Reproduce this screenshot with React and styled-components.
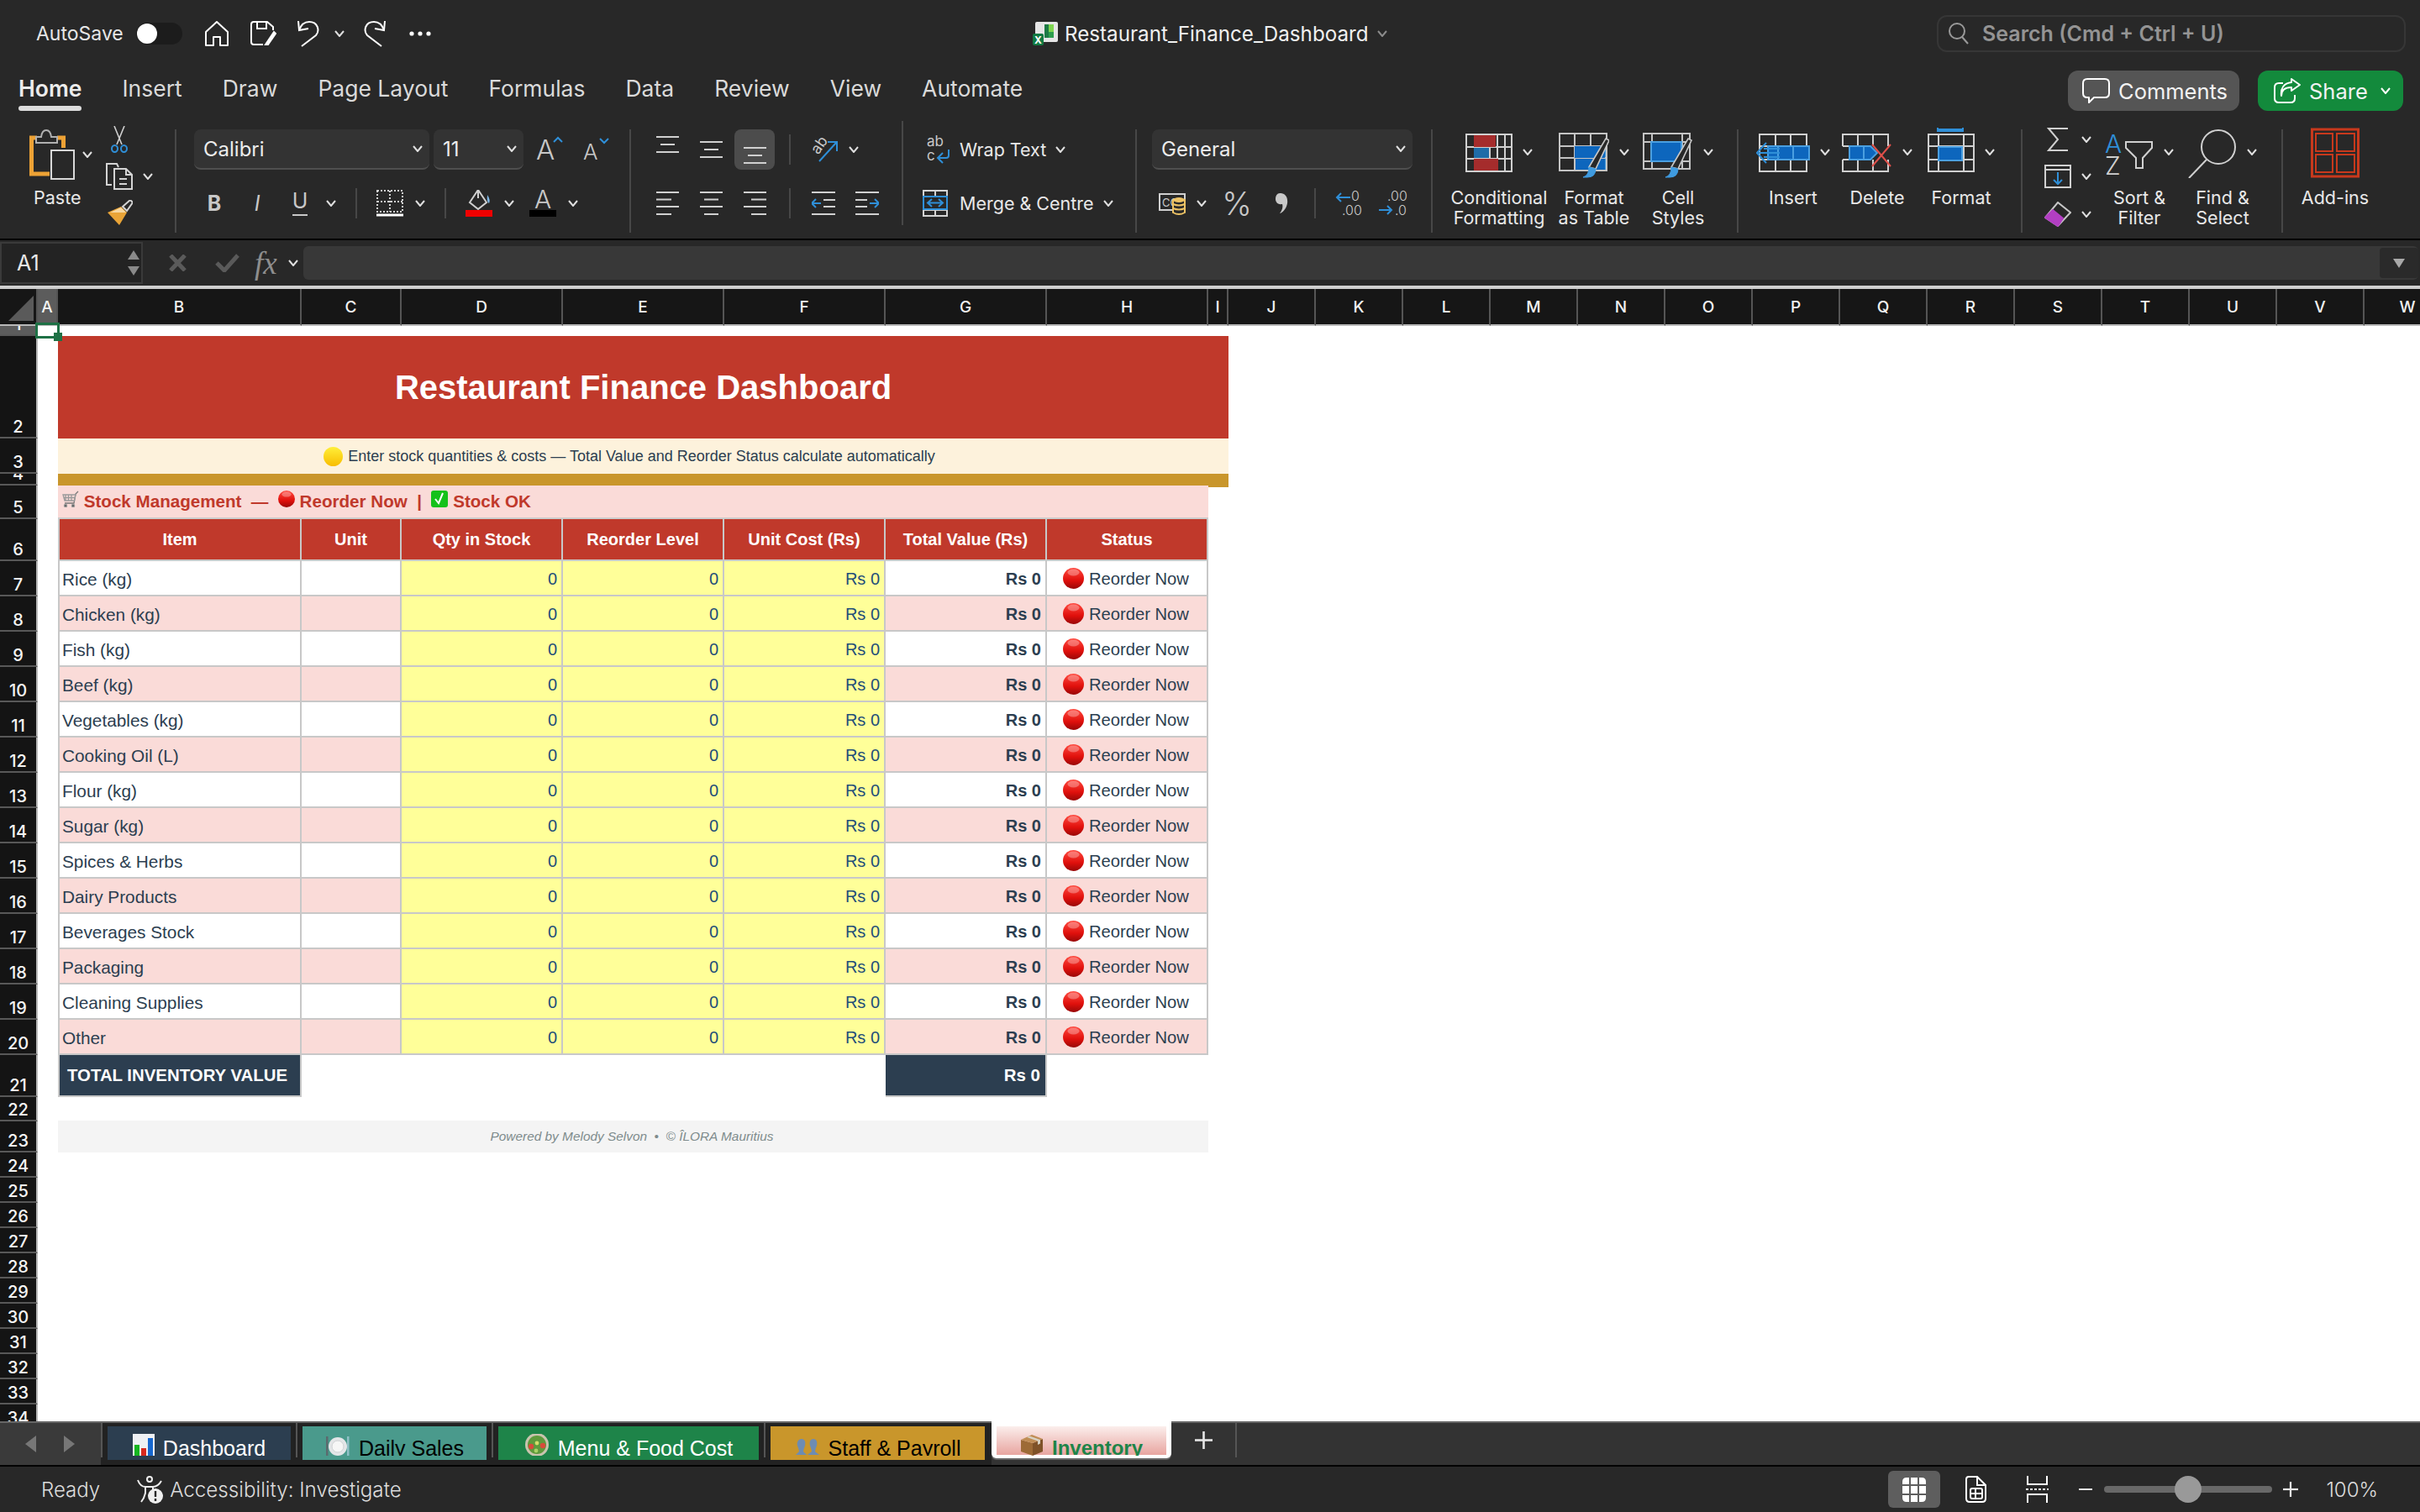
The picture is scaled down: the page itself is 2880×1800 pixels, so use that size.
import React from "react";
import styled, { createGlobalStyle } from "styled-components";

const UI = `Inter, "Noto Sans", sans-serif`;
const SHEET = `"Liberation Sans", Arial, sans-serif`;
const LINE = "#d4d4d4";
const BLUE = "#2f8fd8";

const GlobalStyle = createGlobalStyle`
  html, body {
    margin: 0;
    padding: 0;
    width: 2880px;
    height: 1800px;
    overflow: hidden;
    background: #282828;
  }
  #root { width: 2880px; height: 1800px; }
  * { box-sizing: border-box; }
`;

const Window = styled.div`
  width: 2880px;
  height: 1800px;
  display: flex;
  flex-direction: column;
  background: #282828;
  font-family: ${UI};
  color: #e4e4e4;
`;

/* title bar */
const TitleBar = styled.header`
  height: 74px;
  display: grid;
  grid-template-columns: 1229px 423px 1fr;
  align-items: center;
  padding-top: 6px;
`;
const QuickAccess = styled.div`
  display: flex;
  align-items: center;
  padding-left: 43px;
`;
const AutoSave = styled.span`
  font-size: 23px;
  color: #e6e6e6;
  width: 119px;
`;
const Toggle = styled.div`
  width: 55px;
  height: 26px;
  border-radius: 13px;
  background: #1c1c1c;
  position: relative;
  &::before {
    content: "";
    position: absolute;
    left: 1px;
    top: 1px;
    width: 24px;
    height: 24px;
    border-radius: 50%;
    background: #fff;
  }
`;
const Tool = styled.div`
  display: flex;
  align-items: center;
  justify-content: center;
  flex: none;
  margin-left: ${(p) => p.$ml || 0}px;
  width: ${(p) => (p.$w ? `${p.$w}px` : "auto")};
`;
const DocTitle = styled.div`
  display: flex;
  align-items: center;
  font-size: 24.2px;
  color: #f0f0f0;
  white-space: nowrap;
  gap: 8px;
  svg { flex: none; }
`;
const Search = styled.div`
  margin-left: 653px;
  width: 558px;
  height: 44px;
  border: 2px solid #363636;
  border-radius: 12px;
  display: flex;
  align-items: center;
  padding-left: 12px;
  gap: 16px;
  font-size: 25px;
  font-weight: 600;
  color: #949494;
`;

/* menu tabs */
const MenuBar = styled.nav`
  height: 61px;
  display: flex;
  align-items: center;
  padding: 0 20px 0 22px;
  gap: 48px;
`;
const MenuItem = styled.div`
  position: relative;
  font-size: 26.5px;
  font-weight: ${(p) => (p.$active ? 600 : 400)};
  color: ${(p) => (p.$active ? "#ececec" : "#dadada")};
  &::after {
    content: "";
    display: ${(p) => (p.$active ? "block" : "none")};
    position: absolute;
    left: 0;
    right: 0;
    bottom: -11px;
    height: 6px;
    border-radius: 3px;
    background: #dcdcdc;
  }
`;
const MenuActions = styled.div`
  margin-left: auto;
  display: flex;
  gap: 22px;
  align-self: flex-start;
  margin-top: 10px;
`;
const ActionButton = styled.div`
  height: 48px;
  border-radius: 12px;
  display: flex;
  align-items: center;
  font-size: 25.5px;
  color: #f2f2f2;
  background: ${(p) => p.$bg};
  width: ${(p) => p.$w}px;
  padding-left: ${(p) => p.$pad}px;
  gap: 10px;
`;

/* ribbon */
const Ribbon = styled.section`
  height: 151px;
  display: flex;
  align-items: flex-start;
  border-bottom: 2px solid #000;
`;
const Group = styled.div`
  display: flex;
  flex: none;
  width: ${(p) => p.$w}px;
  height: 123px;
  margin-top: 19px;
  padding-left: ${(p) => p.$pad || 0}px;
`;
const Stack = styled(Group)`
  flex-direction: column;
  gap: 22px;
`;
const ToolRow = styled.div`
  display: flex;
  align-items: center;
  height: ${(p) => p.$h || 36}px;
`;
const Divider = styled.div`
  flex: none;
  width: 2px;
  height: ${(p) => p.$h || 123}px;
  margin-top: ${(p) => p.$mt ?? 19}px;
  background: #474747;
`;
const MiniDivider = styled.div`
  flex: none;
  width: 2px;
  height: 36px;
  margin-left: ${(p) => p.$ml || 0}px;
  background: #474747;
`;
const Select = styled.div`
  flex: none;
  width: ${(p) => p.$w}px;
  height: 48px;
  margin-left: ${(p) => p.$ml || 0}px;
  display: flex;
  align-items: center;
  justify-content: space-between;
  padding: 0 8px 0 11px;
  background: #333;
  border-radius: 8px;
  border-bottom: 2px solid #4f4f4f;
  font-size: 24px;
  color: #ececec;
`;
const Highlight = styled.div`
  flex: none;
  width: 48px;
  height: 48px;
  margin-left: ${(p) => p.$ml || 0}px;
  border-radius: 8px;
  background: #4c4c4c;
  display: flex;
  justify-content: center;
`;
const Glyph = styled.span`
  font-size: ${(p) => p.$size || 25}px;
  line-height: 1;
  color: #c8c8c8;
  font-weight: ${(p) => (p.$bold ? 700 : p.$thin ? 300 : 400)};
  font-style: ${(p) => (p.$italic ? "italic" : "normal")};
  border-bottom: ${(p) => (p.$under ? "2px solid #c8c8c8" : "none")};
  padding-bottom: ${(p) => (p.$under ? 3 : 0)}px;
`;
const ToolText = styled.span`
  font-size: 21.5px;
  color: #e8e8e8;
  white-space: nowrap;
  margin-left: ${(p) => p.$ml || 0}px;
`;
const StatusText = styled(ToolText)`
  font-size: 24.2px;
  font-weight: 300;
  color: #dcdcdc;
`;
const ClipColumn = styled.div`
  width: 91px;
  display: flex;
  flex-direction: column;
  align-items: flex-start;
`;
const PasteRow = styled.div`
  display: flex;
  align-items: center;
  gap: 9px;
  height: 60px;
`;
const SmallColumn = styled.div`
  display: flex;
  flex-direction: column;
  margin-top: ${(p) => p.$mt}px;
  gap: ${(p) => p.$gap}px;
  width: ${(p) => p.$w}px;
`;
const SmallRow = styled.div`
  display: flex;
  align-items: center;
  height: ${(p) => p.$h}px;
  gap: 12px;
`;
const LargeButton = styled.div`
  flex: none;
  width: ${(p) => p.$w}px;
  margin-left: ${(p) => p.$ml || 0}px;
  display: flex;
  flex-direction: column;
  align-items: center;
`;
const LargeIcon = styled.div`
  display: flex;
  align-items: center;
  gap: 12px;
  height: 62px;
  margin-top: -4px;
`;
const LargeLabel = styled.div`
  margin-top: 11px;
  font-size: 21.5px;
  line-height: 24px;
  text-align: center;
  color: #e8e8e8;
  white-space: nowrap;
`;
const PasteLabel = styled(LargeLabel)`
  margin-top: 9px;
  margin-left: 5px;
`;
const TextIcon = styled.svg`
  flex: none;
  overflow: visible;
`;

/* formula bar */
const FormulaBar = styled.div`
  height: 54px;
  display: flex;
  align-items: center;
  background: #282828;
`;
const NameBox = styled.div`
  width: 170px;
  height: 50px;
  flex: none;
  border: 2px solid #3a3a3a;
  background: #232323;
  display: flex;
  align-items: center;
  justify-content: space-between;
  padding: 0 1px 0 18px;
  font-size: 25px;
  color: #e8e8e8;
`;
const Spinner = styled.div`
  display: flex;
  flex-direction: column;
  gap: 6px;
  margin-right: 1px;
`;
const FormulaInput = styled.div`
  flex: 1;
  height: 40px;
  margin-left: 6px;
  margin-right: 2px;
  background: #383838;
  border-radius: 6px;
  display: flex;
  justify-content: flex-end;
  align-items: center;
`;
const FormulaDrop = styled.div`
  width: 46px;
  height: 36px;
  background: #2a2a2a;
  border-radius: 4px;
  display: flex;
  align-items: center;
  justify-content: center;
`;
const FxText = styled.span`
  font-family: "Liberation Serif", serif;
  font-style: italic;
  font-size: 37px;
  color: #8e8e8e;
  margin-left: 18px;
  width: 40px;
`;
const LightRule = styled.div`
  height: 4px;
  background: #cfcfcf;
`;

/* sheet */
const COLS = [45, 24, 290, 119, 192, 192, 192, 192, 192, 24, ...Array(14).fill(104)];
const ROWS = [44, 12, 122, 42, 14, 40, 50, ...Array(14).fill(42), 50, 29, 37, ...Array(11).fill(30)];
const Sheet = styled.main`
  height: 1348px;
  overflow: hidden;
  display: grid;
  grid-template-columns: ${COLS.map((c) => `${c}px`).join(" ")};
  grid-template-rows: ${ROWS.map((r) => `${r}px`).join(" ")};
  background: #fff;
  font-family: ${SHEET};
  color: #2c3e50;
  font-size: 20px;
`;
const Corner = styled.div`
  grid-column: 1;
  grid-row: 1;
  background: #161616;
  border-bottom: 2px solid #b8b8b8;
  border-right: 2px solid #555;
  position: relative;
  &::after {
    content: "";
    position: absolute;
    left: 10px;
    top: 8px;
    width: 30px;
    height: 30px;
    background: #5a5a5a;
    clip-path: polygon(100% 0, 100% 100%, 0 100%);
  }
`;
const ColHead = styled.div`
  grid-row: 1;
  background: ${(p) => (p.$active ? "#5c5c5c" : "#161616")};
  border-bottom: 2px solid #b8b8b8;
  border-right: 2px solid #555;
  display: flex;
  align-items: center;
  justify-content: center;
  font-family: ${UI};
  font-size: 19px;
  font-weight: 500;
  color: #f2f2f2;
`;
const RowHead = styled.div`
  grid-column: 1;
  grid-row: ${(p) => p.$row};
  background: ${(p) => (p.$active ? "#5c5c5c" : "#141414")};
  border-bottom: 2px solid #585858;
  border-right: 2px solid #b8b8b8;
  overflow: hidden;
  display: flex;
  align-items: flex-end;
  justify-content: center;
  font-family: ${UI};
  font-size: 20px;
  line-height: 23px;
  font-weight: 500;
  color: #f4f4f4;
`;
const SelectionCell = styled.div`
  grid-column: 2;
  grid-row: 2;
  position: relative;
  z-index: 2;
`;
const SelectionBox = styled.div`
  position: absolute;
  left: -3px;
  top: -4px;
  width: 29px;
  height: 19px;
  border: 3px solid #1e7145;
  &::after {
    content: "";
    position: absolute;
    right: -6px;
    bottom: -6px;
    width: 10px;
    height: 10px;
    background: #1e7145;
  }
`;
const Banner = styled.div`
  grid-column: 3 / 11;
  grid-row: 3;
  background: #c0392b;
  color: #fff;
  font-size: 40px;
  font-weight: 700;
  display: flex;
  align-items: center;
  justify-content: center;
`;
const Hint = styled.div`
  grid-column: 3 / 11;
  grid-row: 4;
  background: #fdf2dc;
  font-size: 18px;
  display: flex;
  align-items: center;
  justify-content: center;
  gap: 6px;
  padding-right: 33px;
`;
const GoldBar = styled.div`
  grid-column: 3 / 11;
  grid-row: 5;
  background: #c9962b;
  position: relative;
  &::after {
    content: "";
    position: absolute;
    right: 0;
    top: 100%;
    width: 24px;
    height: 2px;
    background: #c9962b;
  }
`;
const SectionRow = styled.div`
  grid-column: 3 / 10;
  grid-row: 6;
  background: #fadbd8;
  border-bottom: 2px solid #cccccc;
  display: flex;
  align-items: center;
  padding: 0 0 0 5px;
  color: #c0392b;
  font-weight: 700;
  font-size: 20.6px;
  white-space: pre;
`;
const RaisedEmoji = styled.span`
  display: flex;
  margin-bottom: 6px;
`;
const Cell = styled.div`
  grid-column: ${(p) => p.$col};
  grid-row: ${(p) => p.$row};
  background: ${(p) => p.$bg || "#fff"};
  border-right: 2px solid #c8c8c8;
  border-bottom: 2px solid #c8c8c8;
  display: flex;
  align-items: center;
  white-space: nowrap;
  padding-top: 3px;
`;
const LabelCell = styled(Cell)`
  border-left: 2px solid #c8c8c8;
  padding-left: 3px;
  font-size: 20.8px;
`;
const NumberCell = styled(Cell)`
  justify-content: flex-end;
  padding-right: 5px;
  color: #1f4e79;
`;
const ValueCell = styled(NumberCell)`
  color: #2c3e50;
  font-weight: 700;
`;
const HeaderCell = styled(Cell)`
  background: #c0392b;
  color: #fff;
  font-weight: 700;
  justify-content: center;
  padding-top: 1px;
  border-left: ${(p) => (p.$first ? "2px solid #c8c8c8" : "none")};
`;
const StatusCell = styled(Cell)`
  padding-left: 19px;
  gap: 6px;
  font-size: 20.2px;
  svg { margin-top: -3px; }
`;
const TotalLabel = styled(LabelCell)`
  background: #2c3e50;
  color: #fff;
  font-weight: 700;
  padding-left: 9px;
  font-size: 20.4px;
  padding-top: 0;
`;
const TotalValue = styled(Cell)`
  background: #2c3e50;
  color: #fff;
  font-weight: 700;
  font-size: 20.5px;
  justify-content: flex-end;
  padding: 0 6px 0 0;
`;
const Footer = styled.div`
  grid-column: 3 / 10;
  grid-row: 24;
  background: #f4f4f4;
  margin-top: -1px;
  font-size: 15.4px;
  font-style: italic;
  color: #7f8c8d;
  display: flex;
  align-items: center;
  justify-content: center;
  white-space: pre;
  padding-right: 3px;
`;

/* sheet tabs */
const TabBar = styled.div`
  height: 54px;
  display: flex;
  background: #333;
  border-top: 2px solid #666;
  border-bottom: 2px solid #000;
`;
const TabNav = styled.div`
  width: 120px;
  flex: none;
  background: #3a3a3a;
  display: flex;
  align-items: center;
  gap: 33px;
  padding: 0 0 0 30px;
`;
const TabSlot = styled.div`
  flex: none;
  background: #222;
  padding: 4px ${(p) => p.$pr || 6}px 0 8px;
  position: relative;
  &::before {
    content: "";
    position: absolute;
    left: 0;
    top: 0;
    height: 41px;
    width: 2px;
    background: #555;
  }
`;
const SheetTab = styled.div`
  width: ${(p) => p.$w}px;
  height: 40px;
  background: ${(p) => p.$bg};
  color: ${(p) => p.$color};
`;
const TabLabel = styled.div`
  height: 35px;
  overflow: hidden;
  display: flex;
  align-items: flex-end;
  justify-content: center;
  gap: 10px;
  font-family: ${SHEET};
  font-size: ${(p) => (p.$bold ? 24 : 25)}px;
  font-weight: ${(p) => (p.$bold ? 700 : 400)};
  color: ${(p) => (p.$bold ? "#1e8449" : "inherit")};
  white-space: nowrap;
  line-height: 18px;
  svg { flex: none; }
`;
const ActiveTab = styled.div`
  flex: none;
  width: 214px;
  height: 44px;
  margin-top: -2px;
  padding: 6px 6px 0;
  background: #fff;
  border-radius: 0 0 6px 6px;
  box-shadow: 0 2px 0 #666;
`;
const ActiveFill = styled.div`
  height: 34px;
  background: linear-gradient(#fbeeec, #e8a5a0);
`;
const AddTab = styled.div`
  width: 78px;
  height: 41px;
  flex: none;
  border-right: 2px solid #555;
  display: flex;
  align-items: center;
  justify-content: center;
`;

/* status bar */
const StatusBar = styled.footer`
  height: 54px;
  display: flex;
  align-items: center;
  padding-left: 49px;
  font-size: 24px;
  color: #dcdcdc;
  font-weight: 300;
`;
const StatusRight = styled.div`
  margin-left: auto;
  display: flex;
  align-items: center;
  padding-right: 50px;
`;
const ViewButton = styled.div`
  width: 62px;
  height: 44px;
  border-radius: 6px;
  background: #5e5e5e;
  display: flex;
  align-items: center;
  justify-content: center;
`;
const ZoomTrack = styled.div`
  width: 200px;
  height: 8px;
  margin-left: 14px;
  border-radius: 4px;
  background: #686868;
  position: relative;
`;
const ZoomKnob = styled.div`
  position: absolute;
  left: 84px;
  top: -12px;
  width: 32px;
  height: 32px;
  border-radius: 50%;
  background: #999;
`;
const ZoomValue = styled.span`
  margin-left: 33px;
`;

/* drawings */
const ChevSvg = styled.svg`
  flex: none;
  width: ${(p) => p.$w || 12}px;
  height: 8px;
`;
const Chev = ({ ml, color = "#e0e0e0", w }) => (
  <ChevSvg viewBox="0 0 12 8" $w={w} style={ml ? { marginLeft: ml } : undefined}>
    <polyline points="1,1 6,7 11,1" fill="none" stroke={color} strokeWidth="2" />
  </ChevSvg>
);
const Table = ({ x, y, w, h, cols = [], rows = [], color = LINE }) => (
  <g fill="none" stroke={color} strokeWidth="2">
    <rect x={x} y={y} width={w} height={h} />
    {cols.map((c) => <line key={`c${c}`} x1={x + c} x2={x + c} y1={y} y2={y + h} />)}
    {rows.map((r) => <line key={`r${r}`} y1={y + r} y2={y + r} x1={x} x2={x + w} />)}
  </g>
);
const HomeIcon = () => (
  <svg width="28" height="30" viewBox="0 0 28 30" fill="none" stroke="#fff" strokeWidth="2">
    <path d="M14 1 L27 13 V29 H18 V19 H10 V29 H1 V13 Z" strokeLinejoin="round" />
  </svg>
);
const SaveIcon = () => (
  <svg width="31" height="30" viewBox="0 0 31 30" fill="none" stroke="#fff" strokeWidth="2">
    <path d="M15 28 H4 Q1 28 1 25 V4 Q1 1 4 1 H20 L27 7 V11" />
    <path d="M8 1 V9 H19 V1" />
    <path d="M18 28 L28 13 L30 15 L21 28 Z" fill="#fff" />
  </svg>
);
const UndoIcon = ({ flip }) => (
  <svg width="28" height="32" viewBox="0 0 28 32" fill="none" stroke="#fff" strokeWidth="2" style={flip ? { transform: "scaleX(-1)" } : undefined}>
    <path d="M6 31 L23 18 C28 12 25 2 15 2 C9 2 5 6 3 12" />
    <path d="M2 1 L3 12 L14 10" />
  </svg>
);
const Dots = () => (
  <svg width="26" height="6" viewBox="0 0 26 6" fill="#fff">
    <circle cx="3" cy="3" r="2.6" /><circle cx="13" cy="3" r="2.6" /><circle cx="23" cy="3" r="2.6" />
  </svg>
);
const ExcelDoc = () => (
  <TextIcon width="30" height="28" viewBox="0 0 30 28">
    <rect x="3" y="0" width="27" height="24" rx="2" fill="#e6e6e6" />
    <rect x="14" y="3" width="5" height="16" fill="#1d7a45" />
    <rect x="19" y="3" width="6" height="9" fill="#7fd650" />
    <rect x="19" y="12" width="6" height="7" fill="#2e9e4e" />
    <rect x="0" y="14" width="13" height="14" rx="2" fill="#117a43" />
    <text x="6.5" y="25.5" textAnchor="middle" fontSize="12" fontWeight="700" fontFamily="Inter" fill="#fff">X</text>
  </TextIcon>
);
const SearchIcon = () => (
  <svg width="24" height="26" viewBox="0 0 24 26" fill="none" stroke="#999" strokeWidth="2">
    <circle cx="10" cy="10" r="9" />
    <line x1="16" y1="17" x2="23" y2="25" />
  </svg>
);
const CommentIcon = () => (
  <svg width="33" height="30" viewBox="0 0 33 30" fill="none" stroke="#fff" strokeWidth="2">
    <path d="M6 1 H27 Q32 1 32 6 V18 Q32 23 27 23 H14 L8 29 V23 H6 Q1 23 1 18 V6 Q1 1 6 1 Z" strokeLinejoin="round" />
  </svg>
);
const ShareIcon = () => (
  <svg width="32" height="30" viewBox="0 0 32 30" fill="none" stroke="#fff" strokeWidth="2">
    <path d="M11 6 H6 Q1 6 1 11 V24 Q1 29 6 29 H20 Q25 29 25 24 V20" />
    <path d="M9 21 C9 14 14 11 21 11 V15 L31 8 L21 1 V5 C12 6 8 12 9 21 Z" strokeLinejoin="round" />
  </svg>
);
const PasteIcon = () => (
  <svg width="54" height="60" viewBox="0 0 54 60" fill="none">
    <path d="M9 10 H2.5 V53 H24 M33 10 H40.5 V22" stroke="#eda235" strokeWidth="5" />
    <path d="M8 16 V9 H14 Q15 1 20 1 Q25 1 26 9 H33 V16 Z" stroke="#b0b0b0" strokeWidth="2" fill="#282828" />
    <rect x="26" y="25" width="27" height="34" stroke="#d8d8d8" strokeWidth="2" fill="#282828" />
  </svg>
);
const CutIcon = () => (
  <svg width="22" height="32" viewBox="0 0 22 32" fill="none">
    <path d="M5 0 L14 22 M17 0 L8 22" stroke="#d0d0d0" strokeWidth="1.6" />
    <ellipse cx="5.5" cy="27" rx="3.5" ry="4" stroke={BLUE} strokeWidth="2" />
    <ellipse cx="16.5" cy="27" rx="3.5" ry="4" stroke={BLUE} strokeWidth="2" />
  </svg>
);
const CopyIcon = () => (
  <svg width="32" height="32" viewBox="0 0 32 32" fill="none" stroke="#d4d4d4" strokeWidth="2">
    <path d="M7 26 H1 V1 H13 L15 5" />
    <path d="M10 7 H24 L31 14 V31 H10 Z" fill="#282828" />
    <path d="M24 7 V14 H31 M16 19 H25 M16 25 H25" />
  </svg>
);
const PainterIcon = () => (
  <svg width="32" height="30" viewBox="0 0 32 30">
    <path d="M20 8 L29 0 L32 3 L25 13 Z" fill="none" stroke="#d4d4d4" strokeWidth="2" />
    <path d="M2 15 L18 8 L25 15 L16 30 Z" fill="#e9a437" />
    <path d="M5 15 L18 9 L24 15 Z" fill="#f6d7a0" />
  </svg>
);
const GrowIcon = ({ small }) => (
  <TextIcon width="32" height="30" viewBox="0 0 32 30">
    <text x="0" y="27" fontFamily="Inter" fontSize={small ? 26 : 33} fontWeight="300" fill="#c8c8c8">A</text>
    <polyline points={small ? "20,8 25,3 30,8" : "21,6 26,1 31,6"} transform={small ? "rotate(180 25 5)" : undefined} fill="none" stroke={BLUE} strokeWidth="2" />
  </TextIcon>
);
const AlignV = ({ at }) => (
  <svg width="27" height="48" viewBox="0 0 27 48" stroke="#d0d0d0" strokeWidth="2">
    <line x1="0" x2="27" y1={at} y2={at} />
    <line x1="5" x2="22" y1={at + 9} y2={at + 9} />
    <line x1="0" x2="27" y1={at + 18} y2={at + 18} />
  </svg>
);
const AlignH = ({ kind }) => {
  const short = kind === "left" ? [0, 18] : kind === "right" ? [9, 27] : [5, 22];
  return (
    <svg width="27" height="36" viewBox="0 0 27 36" stroke="#d0d0d0" strokeWidth="2">
      <line x1="0" x2="27" y1="5" y2="5" />
      <line x1={short[0]} x2={short[1]} y1="13.5" y2="13.5" />
      <line x1="0" x2="27" y1="22" y2="22" />
      <line x1={short[0]} x2={short[1]} y1="31" y2="31" />
    </svg>
  );
};
const BorderIcon = () => (
  <svg width="32" height="32" viewBox="0 0 32 32" fill="none" stroke="#d0d0d0" strokeWidth="2">
    <path d="M1 1 H31 V26 H1 Z M16 1 V26 M1 14 H31" strokeDasharray="2 2" />
    <line x1="0" x2="32" y1="30" y2="30" stroke="#fff" strokeWidth="3" />
  </svg>
);
const FillIcon = () => (
  <svg width="32" height="32" viewBox="0 0 32 32" fill="none">
    <path d="M6 15 L16 0 L26 15 L16 23 Z" stroke="#d0d0d0" strokeWidth="2" transform="translate(-1 0)" />
    <path d="M15 1 V10" stroke="#d0d0d0" strokeWidth="2" />
    <path d="M26 6 Q30 12 28 16 Q25 15 26 6 Z" fill="#7fb8e6" />
    <rect x="0" y="24" width="32" height="8" fill="#f00000" />
  </svg>
);
const FontColorIcon = () => (
  <TextIcon width="32" height="32" viewBox="0 0 32 32">
    <text x="16" y="22" textAnchor="middle" fontFamily="Inter" fontSize="30" fontWeight="300" fill="#c8c8c8">A</text>
    <rect x="0" y="24" width="32" height="8" fill="#000" />
  </TextIcon>
);
const OrientIcon = () => (
  <TextIcon width="34" height="32" viewBox="0 0 34 32">
    <text x="2" y="18" fontFamily="Inter" fontSize="18" fill="#c8c8c8" transform="rotate(-55 10 14)">ab</text>
    <path d="M10 30 L30 8 M20 7 H31 V18" fill="none" stroke={BLUE} strokeWidth="2" />
  </TextIcon>
);
const IndentIcon = ({ flip }) => (
  <svg width="28" height="36" viewBox="0 0 28 36" fill="none" strokeWidth="2" style={flip ? { transform: "scaleX(-1)" } : undefined}>
    <g stroke="#d0d0d0"><path d="M0 5 H28 M14 14 H28 M14 22 H28 M0 31 H28" /></g>
    <path d="M0 18 H11 M5 13 L0 18 L5 23" stroke={BLUE} />
  </svg>
);
const WrapIcon = () => (
  <TextIcon width="28" height="34" viewBox="0 0 28 34" fill="none">
    <text x="0" y="13" fontFamily="Inter" fontSize="17" fill="#c8c8c8">ab</text>
    <text x="0" y="30" fontFamily="Inter" fontSize="17" fill="#c8c8c8">c</text>
    <path d="M26 17 V24 Q26 27 23 27 H14 M19 21 L13 27 L19 33" stroke={BLUE} strokeWidth="2" />
  </TextIcon>
);
const MergeIcon = () => (
  <svg width="30" height="32" viewBox="0 0 30 32" fill="none">
    <Table x={1} y={1} w={28} h={30} cols={[14]} rows={[7, 23]} />
    <rect x="1" y="8" width="28" height="15" fill="#282828" stroke={BLUE} strokeWidth="2" />
    <path d="M7 15.5 H23 M11 11 L6 15.5 L11 20 M19 11 L24 15.5 L19 20" stroke={BLUE} strokeWidth="2" />
  </svg>
);
const CurrencyIcon = () => (
  <TextIcon width="34" height="27" viewBox="0 0 34 27" fill="none">
    <rect x="1" y="2" width="30" height="19" stroke="#d0d0d0" strokeWidth="2" />
    <text x="4" y="17" fontFamily="Inter" fontSize="13" fill="#c8c8c8">CC</text>
    <path d="M17 9 H31 V24 Q24 28 17 24 Z" fill="#282828" stroke="#edc365" strokeWidth="2" />
    <path d="M17 14 Q24 17 31 14 M17 19 Q24 22 31 19" stroke="#edc365" strokeWidth="2" />
    <ellipse cx="24" cy="9" rx="7" ry="3" fill="#edc365" />
  </TextIcon>
);
const DecimalIcon = ({ more }) => (
  <TextIcon width="34" height="32" viewBox="0 0 34 32">
    <text x={more ? 10 : 19} y="13" fontFamily="Inter" fontSize="16" fontWeight="300" fill="#c8c8c8">{more ? ".00" : "0"}</text>
    <text x={more ? 19 : 8} y="30" fontFamily="Inter" fontSize="16" fontWeight="300" fill="#c8c8c8">{more ? ".0" : ".00"}</text>
    <path d={more ? "M0 24 H15 M10 19 L15 24 L10 29" : "M18 9 H2 M7 4 L2 9 L7 14"} fill="none" stroke={BLUE} strokeWidth="2" />
  </TextIcon>
);
const CondIcon = () => (
  <svg width="56" height="62" viewBox="0 0 56 62">
    <rect x="10" y="26" width="18" height="12" fill="#1f6ca8" />
    <Table x={1} y={10} w={54} h={44} cols={[10, 28, 37, 46]} rows={[15, 29]} color="#d0d0d0" />
    <rect x="10" y="11" width="26" height="14" fill="#a52c2c" />
    <rect x="10" y="26" width="18" height="12" fill="#1f6ca8" />
    <rect x="10" y="39" width="29" height="14" fill="#a52c2c" />
  </svg>
);
const Brush = ({ x }) => (
  <g transform={`translate(${x} 0)`}>
    <path d="M8 50 L28 16 L32 18 L16 52 Z" fill="#282828" stroke="#c8c8c8" strokeWidth="1.6" />
    <path d="M1 62 Q8 60 8 50 L16 52 Q16 62 6 62 Z" fill="#3f9be0" stroke="#3f9be0" strokeWidth="1" />
  </g>
);
const FormatTableIcon = () => (
  <svg width="60" height="64" viewBox="0 0 60 64">
    <rect x="19" y="25" width="36" height="29" fill="#0d66bd" stroke="#4a9fe0" strokeWidth="2" />
    <Table x={1} y={10} w={56} h={44} cols={[18, 37]} rows={[15, 29]} color="#c4c4c4" />
    <rect x="19" y="25" width="36" height="14" fill="#0d66bd" />
    <rect x="37" y="40" width="18" height="13" fill="#0d66bd" />
    <Brush x={28} />
  </svg>
);
const CellStylesIcon = () => (
  <svg width="60" height="64" viewBox="0 0 60 64">
    <Table x={1} y={10} w={55} h={42} cols={[10, 46]} rows={[10, 33]} color="#c4c4c4" />
    <rect x="10" y="20" width="36" height="23" fill="#0d66bd" stroke="#4a9fe0" strokeWidth="2" />
    <Brush x={26} />
  </svg>
);
const InsertIcon = () => (
  <svg width="64" height="62" viewBox="0 0 64 62" fill="none">
    <Table x={4} y={10} w={56} h={44} cols={[19, 37]} rows={[14, 30]} color="#d0d0d0" />
    <rect x="14" y="24" width="49" height="16" fill="#0d66bd" stroke="#4a9fe0" strokeWidth="2" />
    <path d="M26 24 V40 M44 24 V40" stroke="#4a9fe0" strokeWidth="2" />
    <path d="M28 32 H3 M12 20 L1 32 L12 44 M28 27 H9 M28 37 H9" stroke={BLUE} strokeWidth="2" />
  </svg>
);
const DeleteIcon = () => (
  <svg width="60" height="62" viewBox="0 0 60 62" fill="none">
    <path d="M1 24 V10 H55 V24 M1 40 V54 H55 V40 M19 10 V24 M37 10 V24 M19 40 V54 M37 40 V54 M1 24 H12 M1 40 H12" stroke="#d0d0d0" strokeWidth="2" />
    <path d="M9 24 H34 L42 32 L34 40 H9 Z" fill="#0d66bd" stroke="#4a9fe0" strokeWidth="2" />
    <path d="M26 24 V40" stroke="#4a9fe0" strokeWidth="2" />
    <path d="M36 22 L58 48 M58 22 L36 48" stroke="#e0504a" strokeWidth="2" />
  </svg>
);
const FormatIcon = () => (
  <svg width="56" height="62" viewBox="0 0 56 62" fill="none">
    <path d="M12 2 V6 H42 V2 M12 4 H42" stroke={BLUE} strokeWidth="2" />
    <Table x={1} y={10} w={54} h={44} cols={[12, 42]} rows={[14, 30]} color="#d0d0d0" />
    <rect x="13" y="25" width="28" height="16" fill="#0d66bd" stroke="#4a9fe0" strokeWidth="2" />
  </svg>
);
const SumIcon = () => (
  <svg width="26" height="28" viewBox="0 0 26 28" fill="none" stroke="#d0d0d0" strokeWidth="2">
    <path d="M25 1 H2 L13 14 L2 27 H25" />
  </svg>
);
const FillDownIcon = () => (
  <svg width="32" height="28" viewBox="0 0 32 28" fill="none">
    <rect x="1" y="1" width="30" height="26" stroke="#d0d0d0" strokeWidth="2" />
    <path d="M1 6 H31" stroke="#d0d0d0" strokeWidth="2" />
    <path d="M16 9 V23 M11 18 L16 23 L21 18" stroke={BLUE} strokeWidth="2" />
  </svg>
);
const ClearIcon = () => (
  <svg width="32" height="30" viewBox="0 0 32 30" fill="none">
    <path d="M1 19 L16 1 L31 13 L16 29 Z" stroke="#c8c8c8" strokeWidth="2" />
    <path d="M1 19 L10 10 L22 20 L16 29 Z" fill="#b23fc2" stroke="#b23fc2" strokeWidth="2" />
  </svg>
);
const SortIcon = () => (
  <TextIcon width="58" height="62" viewBox="0 0 58 62">
    <text x="0" y="32" fontFamily="Inter" fontSize="30" fontWeight="300" fill={BLUE}>A</text>
    <text x="0" y="58" fontFamily="Inter" fontSize="30" fontWeight="300" fill="#d0d0d0">Z</text>
    <path d="M25 19 H56 V26 L45 38 V50 H37 V38 L25 26 Z" fill="none" stroke="#d0d0d0" strokeWidth="2" />
  </TextIcon>
);
const FindIcon = () => (
  <svg width="58" height="62" viewBox="0 0 58 62" fill="none" stroke="#d0d0d0" strokeWidth="2">
    <circle cx="36" cy="25" r="20" />
    <line x1="22" y1="40" x2="1" y2="62" />
  </svg>
);
const AddinsIcon = () => (
  <svg width="58" height="62" viewBox="0 0 58 62" fill="none" stroke="#c8391c">
    <rect x="1.5" y="4" width="55" height="56" strokeWidth="3" />
    <rect x="6" y="9" width="20" height="21" strokeWidth="2" />
    <rect x="31" y="9" width="21" height="21" strokeWidth="2" />
    <rect x="6" y="34" width="20" height="21" strokeWidth="2" />
    <rect x="31" y="34" width="21" height="21" strokeWidth="2" />
  </svg>
);
const Triangle = ({ down, color = "#8a8a8a", w = 14, h = 11 }) => (
  <svg width={w} height={h} viewBox="0 0 14 11" fill={color}>
    <polygon points={down ? "0,0 14,0 7,11" : "7,0 14,11 0,11"} />
  </svg>
);
const NavArrow = ({ right }) => (
  <svg width="13" height="20" viewBox="0 0 13 20" fill="#777">
    <polygon points={right ? "0,0 13,10 0,20" : "13,0 0,10 13,20"} />
  </svg>
);

/* emoji drawn by hand, no colour emoji font is installed */
const RedDot = ({ size = 25 }) => (
  <svg width={size} height={size} viewBox="0 0 25 25" style={{ flex: "none" }}>
    <defs>
      <linearGradient id="redBall" x1="0" y1="0" x2="0" y2="1">
        <stop offset="0" stopColor="#ff4a40" />
        <stop offset="0.6" stopColor="#e0100c" />
        <stop offset="1" stopColor="#980808" />
      </linearGradient>
    </defs>
    <circle cx="12.5" cy="12.5" r="12.5" fill="url(#redBall)" />
    <ellipse cx="12.5" cy="5.5" rx="7" ry="4" fill="#fff" opacity="0.3" />
  </svg>
);
const YellowDot = () => (
  <svg width="23" height="23" viewBox="0 0 25 25" style={{ flex: "none" }}>
    <defs>
      <linearGradient id="yellowBall" x1="0" y1="0" x2="0" y2="1">
        <stop offset="0" stopColor="#ffef3a" />
        <stop offset="1" stopColor="#f8bd00" />
      </linearGradient>
    </defs>
    <circle cx="12.5" cy="12.5" r="12.5" fill="url(#yellowBall)" />
  </svg>
);
const CartEmoji = () => (
  <svg width="20" height="20" viewBox="0 0 20 20" fill="none" stroke="#9a9a9a" strokeWidth="1.3" style={{ flex: "none" }}>
    <path d="M19 1 L16 4 L14 15 H3" stroke="#777" />
    <path d="M1 5 H16 L14.5 12 H3 Z M4 5 V12 M7.5 5 V12 M11 5 V12 M2 8.5 H15" />
    <circle cx="4" cy="18" r="1.6" fill="#555" />
    <circle cx="13" cy="18" r="1.6" fill="#555" />
  </svg>
);
const CheckEmoji = () => (
  <svg width="20" height="20" viewBox="0 0 20 20" style={{ flex: "none" }}>
    <rect width="20" height="20" rx="3" fill="#14c11a" />
    <path d="M5 10 L9 15 L14 3" fill="none" stroke="#fff" strokeWidth="2" />
  </svg>
);
const ChartEmoji = () => (
  <svg width="26" height="26" viewBox="0 0 26 26">
    <rect width="26" height="26" fill="#eef0f4" />
    <rect x="2" y="13" width="6" height="13" fill="#15b520" />
    <rect x="10" y="17" width="6" height="9" fill="#d8281e" />
    <rect x="18" y="5" width="6" height="21" fill="#1768d0" />
  </svg>
);
const PlateEmoji = () => (
  <svg width="30" height="24" viewBox="0 0 30 24">
    <circle cx="15" cy="13" r="11" fill="#e4e6e8" />
    <circle cx="15" cy="13" r="7" fill="#f6f6f6" stroke="#cfd2d4" />
    <rect x="1" y="1" width="2.5" height="23" fill="#5b6a6e" />
    <rect x="26" y="1" width="2.5" height="23" fill="#8fc0c6" />
  </svg>
);
const SaladEmoji = () => (
  <svg width="30" height="26" viewBox="0 0 30 26">
    <circle cx="15" cy="13" r="14" fill="#c9c4ae" />
    <circle cx="15" cy="13" r="11" fill="#5f9a3c" />
    <circle cx="8" cy="15" r="3.2" fill="#d84b3a" />
    <circle cx="22" cy="14" r="3.2" fill="#d84b3a" />
    <circle cx="15" cy="11" r="2.4" fill="#d3dc6a" />
    <circle cx="14" cy="20" r="2.4" fill="#a9d267" />
  </svg>
);
const PeopleEmoji = () => (
  <svg width="30" height="20" viewBox="0 0 30 20" fill="#6d8cb3">
    <path d="M8 0 C12 0 13 4 12 8 C11 11 10 13 10 15 L14 19 H1 L5 15 C5 13 4 11 3 8 C2 4 4 0 8 0 Z" />
    <path d="M22 0 C26 0 27 4 26 8 C25 11 24 13 24 15 L29 19 H15 L20 15 C20 13 19 11 18 8 C17 4 18 0 22 0 Z" />
  </svg>
);
const BoxEmoji = () => (
  <svg width="28" height="26" viewBox="0 0 28 26">
    <path d="M1 7 L15 11 V26 L1 21 Z" fill="#9d6a36" />
    <path d="M15 11 L27 6 V21 L15 26 Z" fill="#7f5228" />
    <path d="M1 7 L14 1 L27 6 L15 11 Z" fill="#c08d55" />
    <path d="M8 4 L21 8.5 V13 L24 11.5 V7 L11 2.5 Z" fill="#d8d2c4" />
  </svg>
);
const AccessIcon = () => (
  <svg width="32" height="33" viewBox="0 0 32 33" fill="none" stroke="#eee" strokeWidth="2">
    <circle cx="15" cy="4" r="3" />
    <path d="M1 5 Q4 13 10 13 H19 Q25 13 29 6 M10 13 L10 20 Q9 26 5 31 M19 13 V17" />
    <circle cx="22" cy="24" r="9" fill="#eee" stroke="none" />
    <path d="M22 18 V25 M22 27 V30" stroke="#282828" strokeWidth="2.4" />
  </svg>
);
const GridViewIcon = () => (
  <svg width="28" height="29" viewBox="0 0 28 29" fill="#fff">
    <path d="M5 0 H8 V8 H0 V5 Q0 0 5 0 Z M10 0 H18 V8 H10 Z M20 0 H23 Q28 0 28 5 V8 H20 Z M0 10 H8 V19 H0 Z M10 10 H18 V19 H10 Z M20 10 H28 V19 H20 Z M0 21 H8 V29 H5 Q0 29 0 24 Z M10 21 H18 V29 H10 Z M20 21 H28 V24 Q28 29 23 29 H20 Z" />
  </svg>
);
const PageViewIcon = () => (
  <svg width="25" height="32" viewBox="0 0 25 32" fill="none" stroke="#fff" strokeWidth="2">
    <path d="M4 1 H14 L24 11 V27 Q24 31 20 31 H5 Q1 31 1 27 V4 Q1 1 4 1 Z" />
    <path d="M14 1 V11 H24" />
    <rect x="6" y="15" width="14" height="12" rx="2" />
    <path d="M6 21 H20 M12 15 V27" />
  </svg>
);
const BreakViewIcon = () => (
  <svg width="27" height="32" viewBox="0 0 27 32" fill="none" stroke="#fff" strokeWidth="2">
    <path d="M2 0 V10 H25 V0 M2 32 V22 H25 V32" />
    <path d="M0 16 H27" strokeDasharray="3 2" />
  </svg>
);
const MathIcon = ({ plus, size = 16 }) => (
  <svg width={size} height={size} viewBox="0 0 16 16" stroke="#e6e6e6" strokeWidth="2">
    <line x1="0" x2="16" y1="8" y2="8" />
    {plus && <line y1="0" y2="16" x1="8" x2="8" />}
  </svg>
);

const ITEMS = [
  "Rice (kg)", "Chicken (kg)", "Fish (kg)", "Beef (kg)", "Vegetables (kg)", "Cooking Oil (L)", "Flour (kg)",
  "Sugar (kg)", "Spices & Herbs", "Dairy Products", "Beverages Stock", "Packaging", "Cleaning Supplies", "Other",
];
const HEADERS = ["Item", "Unit", "Qty in Stock", "Reorder Level", "Unit Cost (Rs)", "Total Value (Rs)", "Status"];
const LETTERS = "ABCDEFGHIJKLMNOPQRSTUVW".split("");
const MENU = ["Home", "Insert", "Draw", "Page Layout", "Formulas", "Data", "Review", "View", "Automate"];
const PINK = "#fadbd8";
const YELLOW = "#ffff99";

export default function App() {
  return (
    <Window>
      <GlobalStyle />
      <TitleBar>
        <QuickAccess>
          <AutoSave>AutoSave</AutoSave>
          <Toggle />
          <Tool $ml={27}><HomeIcon /></Tool>
          <Tool $ml={26}><SaveIcon /></Tool>
          <Tool $ml={24}><UndoIcon /></Tool>
          <Tool $ml={17}><Chev /></Tool>
          <Tool $ml={22}><UndoIcon flip /></Tool>
          <Tool $ml={27}><Dots /></Tool>
        </QuickAccess>
        <DocTitle>
          <ExcelDoc />
          Restaurant_Finance_Dashboard
          <Chev color="#8c8c8c" w={16} />
        </DocTitle>
        <Search>
          <SearchIcon />
          Search (Cmd + Ctrl + U)
        </Search>
      </TitleBar>

      <MenuBar>
        {MENU.map((m, i) => <MenuItem key={m} $active={i === 0}>{m}</MenuItem>)}
        <MenuActions>
          <ActionButton $bg="#555" $w={204} $pad={17}><CommentIcon />Comments</ActionButton>
          <ActionButton $bg="#138a3c" $w={173} $pad={19}>
            <ShareIcon />
            Share
            <Chev w={14} ml={4} color="#fff" />
          </ActionButton>
        </MenuActions>
      </MenuBar>

      <Ribbon>
        <Group $w={208} $pad={35}>
          <ClipColumn>
            <PasteRow><PasteIcon /><Chev /></PasteRow>
            <PasteLabel>Paste</PasteLabel>
          </ClipColumn>
          <SmallColumn $w={60} $mt={-4} $gap={12}>
            <SmallRow $h={32}><Tool $w={32}><CutIcon /></Tool></SmallRow>
            <SmallRow $h={32}><CopyIcon /><Chev /></SmallRow>
            <SmallRow $h={30}><PainterIcon /></SmallRow>
          </SmallColumn>
        </Group>
        <Divider />

        <Stack $w={539} $pad={21}>
          <ToolRow $h={48}>
            <Select $w={280}>Calibri<Chev /></Select>
            <Select $w={107} $ml={5}>11<Chev /></Select>
            <Tool $ml={15} $w={32}><GrowIcon /></Tool>
            <Tool $ml={24} $w={32}><GrowIcon small /></Tool>
          </ToolRow>
          <ToolRow>
            <Tool $ml={16} $w={16}><Glyph $bold>B</Glyph></Tool>
            <Tool $ml={36} $w={14}><Glyph $italic>I</Glyph></Tool>
            <Tool $ml={35} $w={18}><Glyph $under>U</Glyph></Tool>
            <Tool $ml={22}><Chev /></Tool>
            <MiniDivider $ml={23} />
            <Tool $ml={23}><BorderIcon /></Tool>
            <Tool $ml={14}><Chev /></Tool>
            <MiniDivider $ml={23} />
            <Tool $ml={23}><FillIcon /></Tool>
            <Tool $ml={14}><Chev /></Tool>
            <Tool $ml={18}><FontColorIcon /></Tool>
            <Tool $ml={14}><Chev /></Tool>
          </ToolRow>
        </Stack>
        <Divider />

        <Stack $w={322} $pad={30}>
          <ToolRow $h={48}>
            <AlignV at={9} />
            <Tool $ml={25}><AlignV at={15} /></Tool>
            <Highlight $ml={14}><AlignV at={22} /></Highlight>
            <MiniDivider $ml={17} />
            <Tool $ml={24}><OrientIcon /></Tool>
            <Tool $ml={11}><Chev /></Tool>
          </ToolRow>
          <ToolRow>
            <AlignH kind="left" />
            <Tool $ml={25}><AlignH kind="center" /></Tool>
            <Tool $ml={25}><AlignH kind="right" /></Tool>
            <MiniDivider $ml={27} />
            <Tool $ml={25}><IndentIcon /></Tool>
            <Tool $ml={24}><IndentIcon flip /></Tool>
          </ToolRow>
        </Stack>
        <Divider $mt={9} $h={124} />

        <Stack $w={276} $pad={0}>
          <ToolRow $h={48}>
            <Tool $ml={28}><WrapIcon /></Tool>
            <ToolText $ml={11}>Wrap Text</ToolText>
            <Tool $ml={11}><Chev /></Tool>
          </ToolRow>
          <ToolRow>
            <Tool $ml={23}><MergeIcon /></Tool>
            <ToolText $ml={14}>Merge &amp; Centre</ToolText>
            <Tool $ml={11}><Chev /></Tool>
          </ToolRow>
        </Stack>
        <Divider />

        <Stack $w={350} $pad={18}>
          <ToolRow $h={48}>
            <Select $w={310}>General<Chev /></Select>
          </ToolRow>
          <ToolRow>
            <Tool $ml={8}><CurrencyIcon /></Tool>
            <Tool $ml={11}><Chev /></Tool>
            <Tool $ml={20} $w={32}><Glyph $size={38} $thin>%</Glyph></Tool>
            <Tool $ml={29} $w={16}>
              <svg width="16" height="24" viewBox="0 0 16 24"><path d="M6 0 C12 0 16 4 15 12 C14 18 10 23 6 24 C9 20 10 16 9 13 C3 14 1 10 1 7 C1 3 3 0 6 0 Z" fill="#c8c8c8" /></svg>
            </Tool>
            <MiniDivider $ml={31} />
            <Tool $ml={23}><DecimalIcon /></Tool>
            <Tool $ml={18}><DecimalIcon more /></Tool>
          </ToolRow>
        </Stack>
        <Divider />

        <Group $w={362} $pad={15}>
          <LargeButton $w={128}>
            <LargeIcon><CondIcon /><Chev /></LargeIcon>
            <LargeLabel>Conditional<br />Formatting</LargeLabel>
          </LargeButton>
          <LargeButton $w={98}>
            <LargeIcon><FormatTableIcon /><Chev /></LargeIcon>
            <LargeLabel>Format<br />as Table</LargeLabel>
          </LargeButton>
          <LargeButton $w={102}>
            <LargeIcon><CellStylesIcon /><Chev /></LargeIcon>
            <LargeLabel>Cell<br />Styles</LargeLabel>
          </LargeButton>
        </Group>
        <Divider />

        <Group $w={336} $pad={15}>
          <LargeButton $w={100}>
            <LargeIcon><InsertIcon /><Chev /></LargeIcon>
            <LargeLabel>Insert</LargeLabel>
          </LargeButton>
          <LargeButton $w={100}>
            <LargeIcon><DeleteIcon /><Chev /></LargeIcon>
            <LargeLabel>Delete</LargeLabel>
          </LargeButton>
          <LargeButton $w={100}>
            <LargeIcon><FormatIcon /><Chev /></LargeIcon>
            <LargeLabel>Format</LargeLabel>
          </LargeButton>
        </Group>
        <Divider />

        <Group $w={308} $pad={26}>
          <SmallColumn $w={67} $mt={-2} $gap={16}>
            <SmallRow $h={28}><Tool $w={32}><SumIcon /></Tool><Chev /></SmallRow>
            <SmallRow $h={28}><FillDownIcon /><Chev /></SmallRow>
            <SmallRow $h={30}><ClearIcon /><Chev /></SmallRow>
          </SmallColumn>
          <LargeButton $w={92}>
            <LargeIcon><SortIcon /><Chev /></LargeIcon>
            <LargeLabel>Sort &amp;<br />Filter</LargeLabel>
          </LargeButton>
          <LargeButton $w={94} $ml={6}>
            <LargeIcon><FindIcon /><Chev /></LargeIcon>
            <LargeLabel>Find &amp;<br />Select</LargeLabel>
          </LargeButton>
        </Group>
        <Divider />

        <Group $w={124}>
          <LargeButton $w={124}>
            <LargeIcon><AddinsIcon /></LargeIcon>
            <LargeLabel>Add-ins</LargeLabel>
          </LargeButton>
        </Group>
      </Ribbon>

      <FormulaBar>
        <NameBox>
          A1
          <Spinner>
            <Triangle w={14} h={13} />
            <Triangle down w={14} h={13} />
          </Spinner>
        </NameBox>
        <Tool $ml={31}>
          <svg width="21" height="20" viewBox="0 0 21 20" stroke="#5a5a5a" strokeWidth="5"><path d="M2 1 L19 19 M19 1 L2 19" /></svg>
        </Tool>
        <Tool $ml={34}>
          <svg width="29" height="22" viewBox="0 0 29 22" fill="none" stroke="#5a5a5a" strokeWidth="5"><path d="M2 11 L11 20 L27 2" /></svg>
        </Tool>
        <FxText>fx</FxText>
        <Chev />
        <FormulaInput>
          <FormulaDrop><Triangle down color="#a8a8a8" /></FormulaDrop>
        </FormulaInput>
      </FormulaBar>
      <LightRule />

      <Sheet>
        <Corner />
        {LETTERS.map((l, i) => <ColHead key={l} $active={i === 0}>{l}</ColHead>)}
        {ROWS.slice(1).map((_, i) => <RowHead key={i} $row={i + 2} $active={i === 0}>{i + 1}</RowHead>)}
        <SelectionCell><SelectionBox /></SelectionCell>

        <Banner>Restaurant Finance Dashboard</Banner>
        <Hint><YellowDot />Enter stock quantities &amp; costs — Total Value and Reorder Status calculate automatically</Hint>
        <GoldBar />
        <SectionRow>
          <RaisedEmoji><CartEmoji /></RaisedEmoji> Stock Management  —  <RaisedEmoji><RedDot size={20} /></RaisedEmoji> Reorder Now  |  <RaisedEmoji><CheckEmoji /></RaisedEmoji> Stock OK
        </SectionRow>

        {HEADERS.map((h, i) => (
          <HeaderCell key={h} $col={i + 3} $row={7} $first={i === 0}>{h}</HeaderCell>
        ))}

        {ITEMS.map((item, i) => {
          const row = i + 8;
          const bg = i % 2 ? PINK : "#fff";
          return (
            <React.Fragment key={item}>
              <LabelCell $col={3} $row={row} $bg={bg}>{item}</LabelCell>
              <Cell $col={4} $row={row} $bg={bg} />
              <NumberCell $col={5} $row={row} $bg={YELLOW}>0</NumberCell>
              <NumberCell $col={6} $row={row} $bg={YELLOW}>0</NumberCell>
              <NumberCell $col={7} $row={row} $bg={YELLOW}>Rs 0</NumberCell>
              <ValueCell $col={8} $row={row} $bg={bg}>Rs 0</ValueCell>
              <StatusCell $col={9} $row={row} $bg={bg}><RedDot />Reorder Now</StatusCell>
            </React.Fragment>
          );
        })}

        <TotalLabel $col={3} $row={22}>TOTAL INVENTORY VALUE</TotalLabel>
        <TotalValue $col={8} $row={22}>Rs 0</TotalValue>
        <Footer>Powered by Melody Selvon  •  © ÎLORA Mauritius</Footer>
      </Sheet>

      <TabBar>
        <TabNav>
          <NavArrow />
          <NavArrow right />
        </TabNav>
        <TabSlot>
          <SheetTab $w={218} $bg="#2c3e50" $color="#fff"><TabLabel><ChartEmoji />Dashboard</TabLabel></SheetTab>
        </TabSlot>
        <TabSlot>
          <SheetTab $w={219} $bg="#4a9a8c" $color="#000"><TabLabel><PlateEmoji />Daily Sales</TabLabel></SheetTab>
        </TabSlot>
        <TabSlot>
          <SheetTab $w={310} $bg="#1e8449" $color="#fff"><TabLabel><SaladEmoji />Menu &amp; Food Cost</TabLabel></SheetTab>
        </TabSlot>
        <TabSlot $pr={8}>
          <SheetTab $w={255} $bg="#c9962b" $color="#000"><TabLabel><PeopleEmoji />Staff &amp; Payroll</TabLabel></SheetTab>
        </TabSlot>
        <ActiveTab>
          <ActiveFill>
            <TabLabel $bold><BoxEmoji />Inventory</TabLabel>
          </ActiveFill>
        </ActiveTab>
        <AddTab><MathIcon plus size={21} /></AddTab>
      </TabBar>

      <StatusBar>
        Ready
        <Tool $ml={44}><AccessIcon /></Tool>
        <StatusText $ml={7}>Accessibility: Investigate</StatusText>
        <StatusRight>
          <ViewButton><GridViewIcon /></ViewButton>
          <Tool $ml={30}><PageViewIcon /></Tool>
          <Tool $ml={47}><BreakViewIcon /></Tool>
          <Tool $ml={36}><MathIcon /></Tool>
          <ZoomTrack><ZoomKnob /></ZoomTrack>
          <Tool $ml={13}><MathIcon plus size={18} /></Tool>
          <ZoomValue>100%</ZoomValue>
        </StatusRight>
      </StatusBar>
    </Window>
  );
}
